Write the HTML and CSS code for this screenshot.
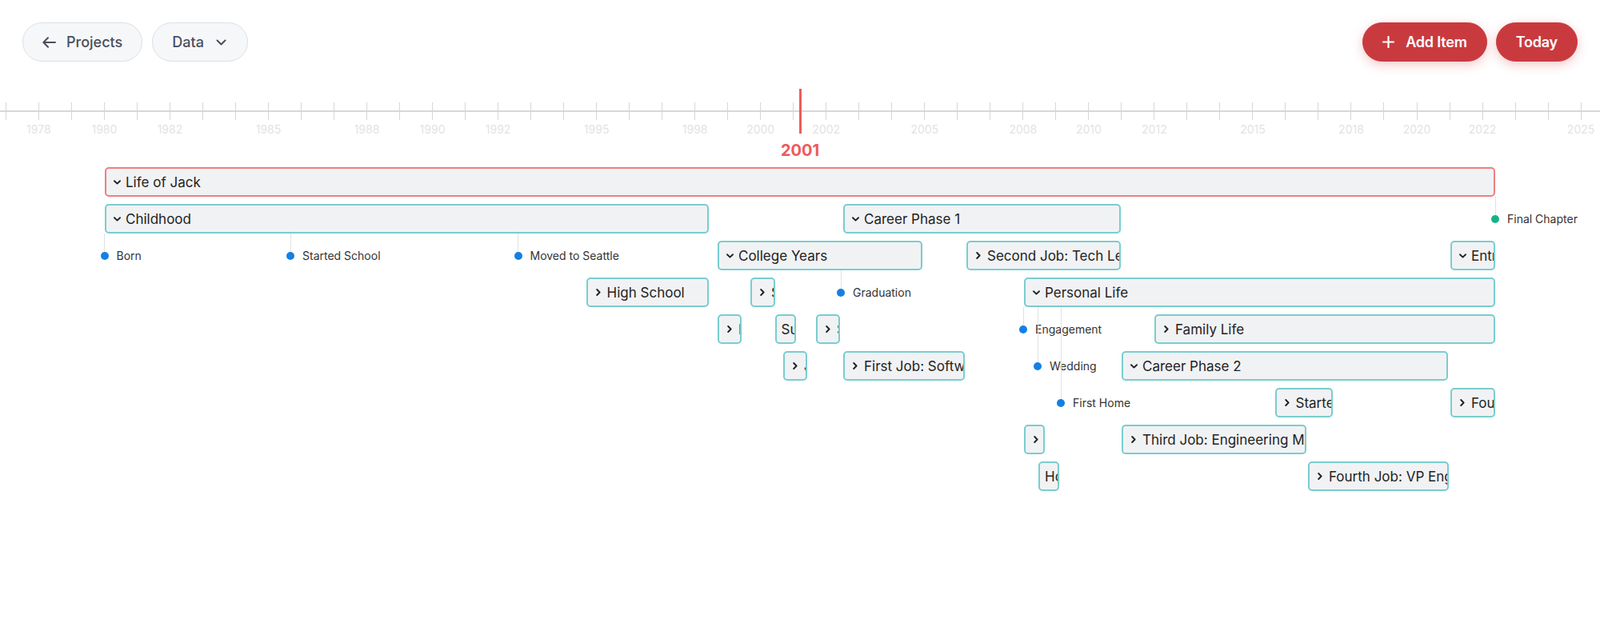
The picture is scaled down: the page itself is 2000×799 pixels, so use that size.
FILE: index.html
```html
<!DOCTYPE html>
<html>

<head>
    <meta charset='utf-8'>
    <title>Life of Jack - Timeline</title>
    <meta name='viewport' content='width=device-width, initial-scale=1'>
    <link rel="stylesheet" href="styles.css">
</head>

<body>
    <header class="toolbar">
        <div class="toolbar-group">
            <button class="pill">
                <svg width="17" height="14" viewBox="0 0 17 14"><path d="M16 7H1.5M7 1.3L1.3 7 7 12.7" fill="none" stroke="currentColor" stroke-width="2" stroke-linecap="round" stroke-linejoin="round"/></svg>
                Projects
            </button>
            <button class="pill pill-data">
                Data
                <svg width="13" height="8" viewBox="0 0 13 8"><path d="M1.5 1.5l5 5 5-5" fill="none" stroke="currentColor" stroke-width="2" stroke-linecap="round" stroke-linejoin="round"/></svg>
            </button>
        </div>
        <div class="toolbar-group toolbar-right">
            <button class="pill pill-primary">
                <svg width="15" height="15" viewBox="0 0 15 15"><path d="M7.5 1v13M1 7.5h13" fill="none" stroke="currentColor" stroke-width="2.2" stroke-linecap="round"/></svg>
                Add Item
            </button>
            <button class="pill pill-primary">Today</button>
        </div>
    </header>

    <main class="timeline">
        <div id="axis" class="axis">
            <div class="axis-line"></div>
        </div>
        <div class="now-marker" style="left: 998.5px;"></div>
        <div class="now-label" style="left: 1000px;">2001</div>
        <div id="lanes" class="lanes"></div>
    </main>

    <script>
        const X0 = 130.4, PX = 41.015, ROW_TOP = 109, ROW_PITCH = 46, BOX_H = 37;
        const yearX = y => X0 + (y - 1980) * PX;
        const rowTop = r => ROW_TOP + r * ROW_PITCH;

        const CHEV_DOWN = '<svg width="9" height="6" viewBox="0 0 9 6"><path d="M1 1.2l3.5 3.4L8 1.2" fill="none" stroke="currentColor" stroke-width="1.9" stroke-linecap="round" stroke-linejoin="round"/></svg>';
        const CHEV_RIGHT = '<svg width="6" height="9" viewBox="0 0 6 9"><path d="M1.2 1l3.4 3.5L1.2 8" fill="none" stroke="currentColor" stroke-width="1.9" stroke-linecap="round" stroke-linejoin="round"/></svg>';

        const labelYears = [1978, 1980, 1982, 1985, 1988, 1990, 1992, 1995, 1998, 2000, 2002, 2005, 2008, 2010, 2012, 2015, 2018, 2020, 2022, 2025];

        // row, left, right, title, state: open | closed | leaf
        const items = [
            [0, 131, 1869, "Life of Jack", "open", "root"],
            [1, 131, 886, "Childhood", "open"],
            [1, 1054, 1401, "Career Phase 1", "open"],
            [2, 897, 1153, "College Years", "open"],
            [2, 1208, 1401, "Second Job: Tech Lead", "closed"],
            [2, 1813, 1869, "Entrepreneurship", "open"],
            [3, 732.5, 886, "High School", "closed"],
            [3, 938, 969, "Sophomore Year", "closed"],
            [3, 1280, 1869, "Personal Life", "open"],
            [4, 897, 927, "Freshman Year", "closed"],
            [4, 968.5, 994.5, "Summer Internship", "leaf"],
            [4, 1020, 1050, "Senior Year", "closed"],
            [4, 1443, 1869, "Family Life", "closed"],
            [5, 979, 1009, "Junior Year", "closed"],
            [5, 1054, 1206, "First Job: Software Engineer", "closed"],
            [5, 1402, 1810, "Career Phase 2", "open"],
            [6, 1593.5, 1665.5, "Started Consulting", "closed"],
            [6, 1813, 1869, "Founded Company", "closed"],
            [7, 1280, 1306, "Kids", "closed"],
            [7, 1402, 1633, "Third Job: Engineering Manager", "closed"],
            [8, 1298, 1324, "Honeymoon", "leaf"],
            [8, 1635, 1811, "Fourth Job: VP Engineering", "closed"]
        ];

        // row, x, title, parent row, colour
        const events = [
            [1, 1869, "Final Chapter", 0, "green"],
            [2, 130.5, "Born", 1],
            [2, 363, "Started School", 1],
            [2, 647.5, "Moved to Seattle", 1],
            [3, 1051, "Graduation", 2],
            [4, 1279, "Engagement", 3],
            [5, 1297, "Wedding", 3],
            [6, 1326, "First Home", 3]
        ];

        function el(cls, html) {
            let div = document.createElement("div");
            div.className = cls;
            if (html) div.innerHTML = html;
            return div;
        }

        function drawAxis() {
            let axis = document.getElementById("axis");
            for (let y = 1977; y <= 2026; y++) {
                let tick = el("tick");
                tick.style.left = (yearX(y) - 0.5) + "px";
                axis.appendChild(tick);
            }
            labelYears.forEach(y => {
                let label = el("tick-label", y);
                label.style.left = yearX(y) + "px";
                axis.appendChild(label);
            });
        }

        function drawItems() {
            let lanes = document.getElementById("lanes");
            items.forEach(([row, x1, x2, title, state, kind]) => {
                let icon = state == "open" ? CHEV_DOWN : state == "closed" ? CHEV_RIGHT : "";
                let box = el("item" + (state == "leaf" ? " leaf" : "") + (kind ? " " + kind : ""),
                    (icon ? '<span class="chev">' + icon + '</span>' : "") + '<span class="item-title">' + title + '</span>');
                box.style.cssText = `left:${x1}px;top:${rowTop(row)}px;width:${x2 - x1}px`;
                lanes.appendChild(box);
            });

            events.forEach(([row, x, title, parent, colour]) => {
                let ev = el("event" + (colour ? " " + colour : ""), '<span class="dot"></span><span>' + title + '</span>');
                ev.style.cssText = `left:${x - 5}px;top:${rowTop(row)}px`;
                lanes.appendChild(ev);
            });

            events.forEach(([row, x, title, parent]) => {
                let top = rowTop(parent) + BOX_H;
                let link = el("link");
                link.style.cssText = `left:${x - 0.5}px;top:${top}px;height:${rowTop(row) + 13.5 - top}px`;
                lanes.appendChild(link);
            });
        }

        drawAxis();
        drawItems();
    </script>
</body>

</html>
```

FILE: styles.css
```css
body {
    background: white;
    color: #222;
    font-family: Inter, "Noto Sans", sans-serif;
    margin: 0;
    overflow: hidden;
}

button {
    font-family: inherit;
}

.toolbar {
    align-items: center;
    display: flex;
    justify-content: space-between;
    padding: 28px 28px 0;
}

.toolbar-group {
    display: flex;
    gap: 12px;
}

.toolbar-right {
    gap: 11px;
}

.pill {
    align-items: center;
    background: #f6f7f9;
    border: 1px solid #dcdfe3;
    border-radius: 999px;
    color: #4a4f5b;
    display: inline-flex;
    font-size: 18px;
    font-weight: 500;
    gap: 13px;
    height: 49px;
    padding: 0 24px;
}

.pill-data {
    gap: 15px;
    padding-right: 26px;
}

.pill-primary {
    background: #c93a3f;
    border-color: #c93a3f;
    box-shadow: 0 4px 14px rgba(214, 60, 66, 0.28);
    color: white;
    font-weight: 600;
    gap: 14px;
    letter-spacing: -0.2px;
}

.timeline {
    height: 699px;
    margin-top: 23px;
    overflow: hidden;
    position: relative;
}

.axis-line {
    background: #d8d8d8;
    height: 2px;
    left: 0;
    position: absolute;
    right: 0;
    top: 38px;
}

.tick {
    background: #d6d6d6;
    height: 22px;
    position: absolute;
    top: 28px;
    width: 1px;
}

.tick-label {
    color: #e3e3e3;
    font-size: 14px;
    line-height: 18px;
    position: absolute;
    top: 53px;
    transform: translateX(-50%);
}

.now-marker {
    background: #ee5b5b;
    height: 56px;
    position: absolute;
    top: 11px;
    width: 3px;
}

.now-label {
    color: #ee5a5a;
    font-size: 20px;
    font-weight: 700;
    line-height: 24px;
    position: absolute;
    top: 76px;
    transform: translateX(-50%);
}

.item {
    align-items: center;
    background: #f1f2f4;
    border: 2px solid #79cdcf;
    border-radius: 5px;
    box-sizing: border-box;
    display: flex;
    font-size: 17px;
    gap: 6px;
    height: 37px;
    overflow: hidden;
    padding-left: 8px;
    position: absolute;
    white-space: nowrap;
}

.item.root {
    border-color: #ef7f7f;
}

.item.leaf {
    padding-left: 6px;
}

.chev {
    color: #222;
    display: flex;
    flex: none;
    justify-content: center;
    width: 10px;
}

.item-title {
    flex: none;
}

.event {
    align-items: center;
    color: #333;
    display: flex;
    font-size: 14px;
    gap: 10px;
    height: 37px;
    position: absolute;
    white-space: nowrap;
}

.dot {
    background: #1480e3;
    border-radius: 50%;
    height: 10px;
    width: 10px;
}

.event.green .dot {
    background: #15b38a;
}

.link {
    background: #dfe1e5;
    position: absolute;
    width: 1px;
}
```
